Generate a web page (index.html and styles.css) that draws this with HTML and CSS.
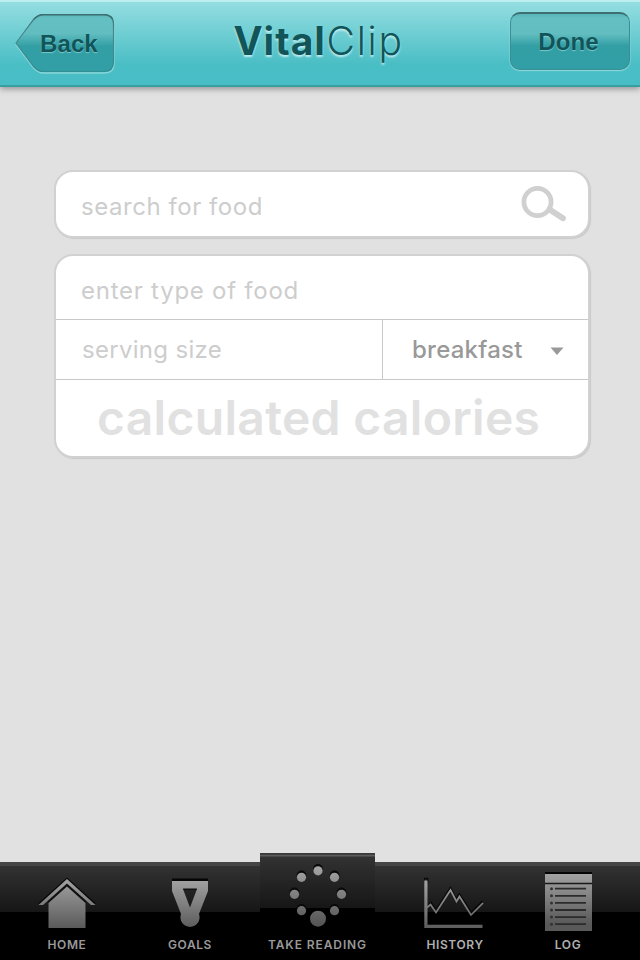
FILE: index.html
```html
<!DOCTYPE html>
<html lang="en">
<head>
<meta charset="utf-8">
<title>VitalClip</title>
<link rel="stylesheet" href="styles.css">
</head>
<body>
<div class="app">
  <header class="header">
    <button class="back">
      <svg class="back-shape" width="102" height="62" viewBox="0 0 102 62">
        <defs>
          <linearGradient id="btn" x1="0" y1="0" x2="0" y2="1">
            <stop offset="0" stop-color="#57b6b9"/><stop offset=".07" stop-color="#64bfc2"/><stop offset=".33" stop-color="#62bdc0"/><stop offset=".56" stop-color="#329fa5"/><stop offset="1" stop-color="#329fa6"/>
          </linearGradient>
          <linearGradient id="edge" x1="0" y1="0" x2="0" y2="1">
            <stop offset="0" stop-color="#3c6e71"/><stop offset=".3" stop-color="#45878a"/><stop offset="1" stop-color="#318e93"/>
          </linearGradient>
        </defs>
        <path transform="translate(0 1)" d="M2 30.500 L20 6 Q24.500 1.500 29 1.500 H90 Q100 1.500 100 11.500 V49 Q100 59 90 59 H29 Q24.500 59 20 54.500 Z" fill="none" stroke="#86d5d9" stroke-width="1.500"/>
        <path d="M2 30 L20 6 Q24.500 1.500 29 1.500 H90 Q99.500 1.500 99.500 11 V49 Q99.500 58.500 90 58.500 H29 Q24.500 58.500 20 54 Z" fill="url(#btn)" stroke="url(#edge)" stroke-width="1.200"/>
        <path d="M20 6 Q24.500 1.800 29 1.800 H90 Q96 1.800 98.500 6" fill="none" stroke="#3d6f72" stroke-width="1.600"/>
      </svg>
      <span>Back</span>
    </button>
    <h1 class="title"><b>Vital</b><span>Clip</span></h1>
    <button class="done">Done</button>
  </header>

  <main class="content">
    <div class="card search">
      <span class="hint search-hint">search for food</span>
      <svg class="magnifier" width="46" height="38" viewBox="0 0 46 38">
        <circle cx="16.500" cy="17" r="13.600" fill="none" stroke="#d0d0d0" stroke-width="4.800"/>
        <path d="M28.500 24.500 L42 33.300" stroke="#d0d0d0" stroke-width="5.800" stroke-linecap="round"/>
      </svg>
    </div>
    <div class="card entry">
      <div class="type"><span class="hint type-hint">enter type of food</span></div>
      <div class="row">
        <div class="serving"><span class="hint serving-hint">serving size</span></div>
        <div class="meal"><span class="meal-name">breakfast</span><svg width="14" height="8" viewBox="0 0 14 8"><path d="M.5 .5H13.500L7 8Z" fill="#999"/></svg></div>
      </div>
      <div class="total">calculated calories</div>
    </div>
  </main>

  <nav class="tabs">
    <a class="tab home">
      <svg width="60" height="58" viewBox="0 0 60 58">
        <defs><linearGradient id="ico" gradientUnits="userSpaceOnUse" x1="0" y1="2" x2="0" y2="54"><stop offset="0" stop-color="#a5a5a5"/><stop offset="1" stop-color="#595959"/></linearGradient></defs>
        <path d="M1 30 L30 4 L59 30 H53 L30 10 L7 30Z" transform="translate(0 -1.500)" fill="#080808"/>
        <path d="M30 8 L49 25.500 V33 H11 V25.500Z" fill="#101010"/>
        <path d="M1.500 30 L30 4 L58.500 30 H54 L30 8.500 L6 30Z" fill="url(#ico)"/>
        <path d="M30 11.500 L48.500 28 V53 H11.500 V28Z" fill="url(#ico)"/>
      </svg>
      <span>HOME</span>
    </a>
    <a class="tab goals">
      <svg width="60" height="58" viewBox="0 0 60 58">
        <path d="M12 2.500H48V8H12Z" fill="#050505"/>
        <path fill-rule="evenodd" d="M12 5H48V15L39 38A9.600 9.600 0 1 1 21 38L12 15ZM23 13L30 31.500L37 13Z" fill="url(#ico)"/>
        <path d="M23 12.500H37L36.500 14H23.500Z" fill="#111"/>
      </svg>
      <span>GOALS</span>
    </a>
    <a class="tab reading">
      <svg width="60" height="68" viewBox="0 0 60 68">
        <defs><linearGradient id="dots" gradientUnits="userSpaceOnUse" x1="0" y1="4" x2="0" y2="66"><stop offset="0" stop-color="#aaa"/><stop offset="1" stop-color="#555"/></linearGradient></defs>
        <g fill="#090909"><circle cx="30" cy="10" r="4.900"/><circle cx="13.500" cy="16.500" r="4.900"/><circle cx="46.500" cy="16.500" r="4.900"/><circle cx="6.500" cy="33.500" r="4.900"/><circle cx="53.500" cy="33.500" r="4.900"/><circle cx="13.500" cy="50" r="4.900"/><circle cx="46.500" cy="50" r="4.900"/></g>
        <g fill="url(#dots)"><circle cx="30" cy="11.800" r="4.600"/><circle cx="13.500" cy="18.300" r="4.600"/><circle cx="46.500" cy="18.300" r="4.600"/><circle cx="6.500" cy="35.300" r="4.600"/><circle cx="53.500" cy="35.300" r="4.600"/><circle cx="13.500" cy="51.700" r="4.600"/><circle cx="46.500" cy="51.700" r="4.600"/><circle cx="30" cy="59.700" r="8"/></g>
      </svg>
      <span>TAKE READING</span>
    </a>
    <a class="tab history">
      <svg width="62" height="58" viewBox="0 0 62 58">
        <path d="M.2 1.500H3.500V5H.2ZM3.500 29L7 25.500L12 33L26.500 10.500L32 21.500L35.500 17L47 35.500L58.500 24" fill="none" stroke="#090909" stroke-width="1.600"/>
        <path d="M3 30.500L6.500 27.500L12 35.500L26.500 13L32.500 24.500L35.500 19.500L47 38L59 26" fill="none" stroke="url(#ico)" stroke-width="1.700"/>
        <path d="M.3 3.500H3.500V47.700H58.500V51H.3Z" fill="url(#ico)"/>
      </svg>
      <span>HISTORY</span>
    </a>
    <a class="tab log">
      <svg width="60" height="62" viewBox="0 0 60 62">
        <path d="M7 2H54V5H7Z" fill="#050505"/>
        <path d="M7 4H54V61H7Z" fill="url(#ico)"/>
        <path d="M7 13.500H54" stroke="#191919" stroke-width="1.700"/>
        <path d="M17 18.700H48M17 25.800H48M17 32.900H48M17 40H48M17 47.100H48M17 54.200H48" stroke="#2b2b2b" stroke-width="1.800"/>
        <g fill="#333"><circle cx="13.500" cy="18.700" r="1.500"/><circle cx="13.500" cy="25.800" r="1.500"/><circle cx="13.500" cy="32.900" r="1.500"/><circle cx="13.500" cy="40" r="1.500"/><circle cx="13.500" cy="47.100" r="1.500"/><circle cx="13.500" cy="54.200" r="1.500"/></g>
      </svg>
      <span>LOG</span>
    </a>
  </nav>
</div>
</body>
</html>
```

FILE: styles.css
```css
* { box-sizing: border-box; }
body { margin: 0; background: #e1e1e1; }
.app {
  width: 640px; height: 960px;
  display: flex; flex-direction: column;
  font-family: Inter, "Liberation Sans", sans-serif;
  overflow: hidden;
}
svg { display: block; flex: none; }

.header {
  height: 87px; flex: none;
  display: flex; align-items: flex-start; justify-content: space-between;
  padding: 10px 10px 0 14px;
  border-top: 2px solid #bdeff2;
  border-bottom: 2px solid #369fa2;
  background: linear-gradient(#94dee1 0, #4abec5 75%, #49bdc5 100%);
  box-shadow: 0 2px 6px rgba(0,0,0,.35);
}
.back, .done {
  font: bold 24px/58px "Liberation Sans", sans-serif;
  color: #115559; border: 0; padding: 0; background: none;
  text-shadow: 0 1px 1px rgba(150,220,223,.7);
}
.back { position: relative; width: 102px; height: 62px; margin-top: 1px; text-align: left; }
.back-shape { position: absolute; left: 0; top: 0; }
.back span { position: relative; display: block; padding-left: 26px; line-height: 60px; letter-spacing: .1px; }
.done {
  width: 120px; height: 58px; border-radius: 10px;
  border: 1px solid #3a8f94; border-top: 2px solid #3d6f72;
  line-height: 56px; padding-right: 3px; letter-spacing: .1px;
  background: linear-gradient(#57b4b7 0, #64bfc2 8%, #62bdc0 36%, #329fa5 58%, #329fa6 100%);
  box-shadow: 0 1px 1px #90d9dc, 0 0 1px 1px rgba(150,220,223,.35);
}
.title {
  margin: 0; display: flex; width: 171px;
  font-size: 39px; line-height: 47px; font-weight: 350; color: #115559;
  padding-top: 5px; white-space: nowrap; letter-spacing: 1.8px;
  text-shadow: 0 2px 2px rgba(215,248,249,.8);
  position: relative; left: 6px;
}
.title b { font-weight: 750; width: 93px; letter-spacing: 1px; }

.content { flex: 1; padding: 83px 50px 0 54px; display: flex; flex-direction: column; gap: 16px; }
.card {
  background: #fff; border: 2px solid #d1d1d1; border-radius: 19px;
  box-shadow: 1px 1px 1px #c9c9c9;
}
.search { height: 68px; display: flex; justify-content: space-between; padding: 12px 21px 0 25px; }
.hint { color: #cdcdcd; font-size: 24px; font-weight: 400; line-height: 46px; letter-spacing: .55px; white-space: nowrap; }
.type-hint { letter-spacing: .75px; }
.serving-hint { letter-spacing: .3px; }
.magnifier { margin-top: 1px; }
.entry { height: 204px; }
.type { height: 64px; padding: 12px 0 0 25px; border-bottom: 1px solid #c9c9c9; }
.row { height: 60px; display: flex; border-bottom: 1px solid #c9c9c9; }
.serving { width: 327px; padding: 7px 0 0 26px; border-right: 1px solid #c9c9c9; }
.meal { flex: 1; display: flex; align-items: center; justify-content: space-between; padding: 3px 24px 0 29px; }
.meal-name { color: #999; font-size: 24px; font-weight: 550; letter-spacing: .25px; line-height: 30px; padding-bottom: 2px; }
.total { height: 76px; padding-left: 41px; color: #e1e1e1; font-size: 48px; font-weight: 600; line-height: 75px; letter-spacing: .3px; white-space: nowrap; }

.tabs {
  height: 98px; flex: none; display: flex; align-items: flex-end;
  border-top: 4px solid #454545;
  background: linear-gradient(#323232 0, #161616 46px, #000 46px);
}
.tab { display: flex; flex-direction: column; align-items: center; justify-content: flex-end; height: 94px; color: #999; font-size: 12px; font-weight: 600; line-height: 14px; letter-spacing: .6px; padding-bottom: 8px; }
.tab svg { margin-bottom: 3px; }
.tab span { white-space: nowrap; }
.home { width: 134px; }
.home svg { margin-bottom: 5px; }
.goals { width: 126px; padding-right: 14px; }
.goals svg { margin-bottom: 4px; }
.reading {
  width: 115px; height: 107px; flex: none; letter-spacing: .9px;
  border-top: 1px solid #3a3a3a;
  background: linear-gradient(#404040 0, #404040 1px, #5c5c5c 1px, #5c5c5c 2px, #323232 3px, #161616 54px, #000 54px);
}
.reading svg { margin-bottom: 11px; }
.history { width: 160px; color: #b0b0b0; }
.log { width: 105px; padding-right: 39px; color: #b0b0b0; }
.log svg { margin-bottom: 6px; }
```
